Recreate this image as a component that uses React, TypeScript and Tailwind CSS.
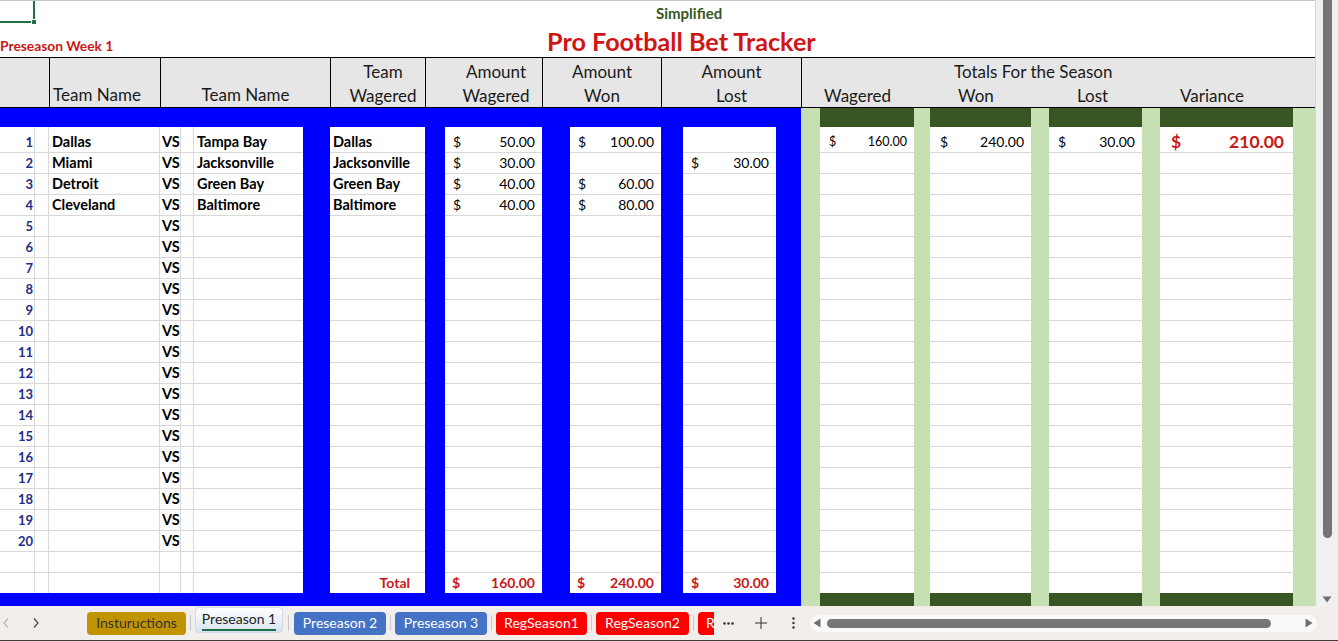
import React from "react";

const COLS =
  "grid grid-cols-[35px_14px_111px_21px_13px_109px_27px_95px_20px_97px_28px_91px_22px_93px_25px_19px_94px_16px_101px_18px_93px_18px_133px_22px]";

// g = white with gridlines right+bottom, w = white bottom line, b = blue stripe, l = light green stripe
const kind = ["g", "g", "g", "g", "g", "w", "b", "w", "b", "w", "b", "w", "b", "w", "b", "l", "w", "l", "w", "l", "w", "l", "w", "l"];

const cellBg = (k: string, line: boolean) => {
  if (k === "b") return "bg-[#0000ff]";
  if (k === "l") return "bg-[#c6e0b4]";
  if (k === "g") return line ? "bg-white border-r border-b border-[#d9d9d9]" : "bg-white border-r border-[#d9d9d9]";
  return line ? "bg-white border-b border-[#d9d9d9]" : "bg-white";
};

const bandBg = (i: number) => (i <= 14 ? "bg-[#0000ff]" : kind[i] === "l" ? "bg-[#c6e0b4]" : "bg-[#375623]");

type Game = { home: string; away: string; pick: string; wager: string; won: string; lost: string };

const games: Game[] = [
  { home: "Dallas", away: "Tampa Bay", pick: "Dallas", wager: "50.00", won: "100.00", lost: "" },
  { home: "Miami", away: "Jacksonville", pick: "Jacksonville", wager: "30.00", won: "", lost: "30.00" },
  { home: "Detroit", away: "Green Bay", pick: "Green Bay", wager: "40.00", won: "60.00", lost: "" },
  { home: "Cleveland", away: "Baltimore", pick: "Baltimore", wager: "40.00", won: "80.00", lost: "" },
];

const Money = ({ v, className }: { v: string; className: string }) =>
  v ? (
    <div className={`w-full flex justify-between leading-[20px] ${className}`}>
      <span>$</span>
      <span>{v}</span>
    </div>
  ) : null;

function Row({ h, cells, line = true }: { h: string; cells: Record<number, React.ReactNode>; line?: boolean }) {
  return (
    <div className={`${COLS} ${h}`}>
      {kind.map((k, i) => (
        <div key={i} className={`${cellBg(k, line)} flex items-end min-w-0 overflow-hidden whitespace-nowrap`}>
          {cells[i]}
        </div>
      ))}
    </div>
  );
}

function Band({ h }: { h: string }) {
  return (
    <div className={`${COLS} ${h}`}>
      {kind.map((_, i) => (
        <div key={i} className={bandBg(i)} />
      ))}
    </div>
  );
}

const team = "pl-[3px] leading-[20px] text-[14.5px] font-bold";

function Sheet() {
  const rows = Array.from({ length: 20 }, (_, i) => games[i]);
  return (
    <div className="w-[1315px] flex flex-col">
      {/* row 1 */}
      <div className="flex h-[23px] border-t border-[#c6c6c6]">
        <div className="relative w-[35px] h-full border-r-2 border-b-2 border-[#217346]">
          <div className="absolute right-[-4px] bottom-[-4px] w-[6px] h-[6px] bg-[#217346] border border-white" />
        </div>
        <div className="pl-[621px] pt-[1px] text-[15px] font-bold text-[#375623] leading-[22px]">Simplified</div>
      </div>

      {/* row 2 */}
      <div className="flex h-[34px] items-end">
        <div className="w-[547px] pb-[3px] text-[13.8px] font-bold text-[#c81818] leading-[16px]">Preseason Week 1</div>
        <div className="pb-[2px] text-[25.2px] font-bold text-[#d01515] leading-[28px]">Pro Football Bet Tracker</div>
      </div>

      {/* headers */}
      <div className="flex h-[51px] border-y border-black bg-[#e7e6e6] text-[17px] leading-[24px] text-[#1a1a1a]">
        <div className="w-[50px] border-r border-black" />
        <div className="w-[111px] border-r border-black pt-[2px] flex flex-col">
          <div className="h-[24px]" />
          <div className="pl-[3px]">Team Name</div>
        </div>
        <div className="w-[170px] border-r border-black pt-[2px] flex flex-col text-center">
          <div className="h-[24px]" />
          <div>Team Name</div>
        </div>
        <div className="w-[95px] border-r border-black pt-[2px] pl-[10px] flex flex-col text-center">
          <div>Team</div>
          <div>Wagered</div>
        </div>
        <div className="w-[117px] border-r border-black pt-[2px] pl-[24px] flex flex-col text-center">
          <div>Amount</div>
          <div>Wagered</div>
        </div>
        <div className="w-[119px] border-r border-black pt-[2px] flex flex-col text-center">
          <div>Amount</div>
          <div>Won</div>
        </div>
        <div className="w-[140px] border-r border-black pt-[2px] flex flex-col text-center">
          <div>Amount</div>
          <div>Lost</div>
        </div>
        <div className="w-[513px] pt-[2px] flex flex-col">
          <div className="pl-[152px]">Totals For the Season</div>
          <div className="flex pl-[22px]">
            <span className="w-[134px]">Wagered</span>
            <span className="w-[119px]">Won</span>
            <span className="w-[103px]">Lost</span>
            <span>Variance</span>
          </div>
        </div>
      </div>

      <Band h="h-[19px]" />

      {rows.map((g, i) => {
        const cells: Record<number, React.ReactNode> = {
          0: (
            <div className="w-full text-right pr-[1px] leading-[20px] text-[13px] font-bold text-[#1f2d86]">{i + 1}</div>
          ),
          3: <div className="pl-[2px] leading-[20px] text-[14.5px] font-bold">VS</div>,
        };
        if (g) {
          cells[2] = <div className={team}>{g.home}</div>;
          cells[5] = <div className={team}>{g.away}</div>;
          cells[7] = <div className={team}>{g.pick}</div>;
          cells[9] = <Money v={g.wager} className="pl-[8px] pr-[7px] text-[14px]" />;
          cells[11] = <Money v={g.won} className="pl-[8px] pr-[7px] text-[14px]" />;
          cells[13] = <Money v={g.lost} className="pl-[8px] pr-[7px] text-[14px]" />;
        }
        if (i === 0) {
          cells[16] = <Money v="160.00" className="pl-[9px] pr-[7px] text-[12.5px]" />;
          cells[18] = <Money v="240.00" className="pl-[10px] pr-[7px] text-[14px]" />;
          cells[20] = <Money v="30.00" className="pl-[9px] pr-[7px] text-[14px]" />;
          cells[22] = (
            <Money v="210.00" className="pl-[11px] pr-[9px] text-[17.5px] font-bold text-[#c81818]" />
          );
        }
        return <Row key={i} h={i === 0 ? "h-[26px]" : "h-[21px]"} cells={cells} />;
      })}

      <Row h="h-[21px]" cells={{}} />
      <Row
        h="h-[20px]"
        line={false}
        cells={{
          7: (
            <div className="w-full text-right pr-[15px] leading-[20px] text-[14px] font-bold text-[#c81818]">Total</div>
          ),
          9: <Money v="160.00" className="pl-[7px] pr-[7px] text-[14px] font-bold text-[#c81818]" />,
          11: <Money v="240.00" className="pl-[7px] pr-[7px] text-[14px] font-bold text-[#c81818]" />,
          13: <Money v="30.00" className="pl-[8px] pr-[7px] text-[14px] font-bold text-[#c81818]" />,
        }}
      />
      <Band h="h-[13px]" />
    </div>
  );
}

function VScroll() {
  return (
    <div className="w-[23px] h-full bg-[#f1f0f0] border-l border-[#d6d6d6] flex flex-col items-center">
      <div className="w-[9px] h-[538px] rounded-b-full bg-[#747474]" />
      <svg className="mt-auto mb-[3px]" width="10" height="7" viewBox="0 0 10 7">
        <path d="M0.5 0.5 H9.5 L5 6.5 Z" fill="#6f6f6f" />
      </svg>
    </div>
  );
}

const Sep = ({ m }: { m: string }) => <div className={`${m} w-px h-[16px] bg-[#c8c8c8]`} />;

function TabBar() {
  return (
    <div className="h-[35px] bg-[#f1eeec] border-b border-[#3c3c3c] flex items-center text-[14px] leading-[18px] whitespace-nowrap">
      <div className="w-[87px] flex items-center">
        <svg className="ml-[3px]" width="6" height="10" viewBox="0 0 6 10">
          <path d="M5 0.5 L1 5 L5 9.5" stroke="#b5b5b5" strokeWidth="1.2" fill="none" />
        </svg>
        <svg className="ml-[24px]" width="6" height="10" viewBox="0 0 6 10">
          <path d="M1 0.5 L5 5 L1 9.5" stroke="#444" strokeWidth="1.2" fill="none" />
        </svg>
      </div>
      <div className="w-[99px] h-[23px] rounded-[4px] bg-[#c29300] text-[#333] flex items-center justify-center">
        Instuructions
      </div>
      <Sep m="mx-[4px]" />
      <div className="self-start mt-[1px] w-[88px] h-[26px] rounded-[4px] border border-[#d3dae5] bg-linear-to-b from-white to-[#d7e2f0] flex flex-col items-center pt-[2px] text-[#222]">
        <span className="leading-[18px]">Preseason 1</span>
        <div className="mt-[1px] h-[2px] w-[74px] bg-[#1e7145]" />
      </div>
      <Sep m="mx-[5px]" />
      <div className="w-[92px] h-[23px] rounded-[4px] bg-[#4472c4] text-white flex items-center justify-center">
        Preseason 2
      </div>
      <Sep m="mx-[4px]" />
      <div className="w-[92px] h-[23px] rounded-[4px] bg-[#4472c4] text-white flex items-center justify-center">
        Preseason 3
      </div>
      <Sep m="mx-[4px]" />
      <div className="w-[91px] h-[23px] rounded-[4px] bg-[#ff0000] text-white flex items-center justify-center">
        RegSeason1
      </div>
      <Sep m="mx-[4px]" />
      <div className="w-[93px] h-[23px] rounded-[4px] bg-[#ff0000] text-white flex items-center justify-center">
        RegSeason2
      </div>
      <Sep m="mx-[4px]" />
      <div className="w-[16px] h-[23px] rounded-l-[4px] bg-[#ff0000] text-white flex items-center pl-[8px]">
        R
      </div>
      <svg className="ml-[9px]" width="11" height="3" viewBox="0 0 11 3">
        <circle cx="1.5" cy="1.5" r="1.3" fill="#333" />
        <circle cx="5.5" cy="1.5" r="1.3" fill="#333" />
        <circle cx="9.5" cy="1.5" r="1.3" fill="#333" />
      </svg>
      <svg className="ml-[21px]" width="12" height="12" viewBox="0 0 12 12">
        <path d="M6 0 V12 M0 6 H12" stroke="#333" strokeWidth="1" />
      </svg>
      <svg className="ml-[25px]" width="3" height="12" viewBox="0 0 3 12">
        <circle cx="1.5" cy="1.5" r="1.2" fill="#333" />
        <circle cx="1.5" cy="6" r="1.2" fill="#333" />
        <circle cx="1.5" cy="10.5" r="1.2" fill="#333" />
      </svg>
      <div className="ml-[15px] w-[507px] h-[17px] rounded-full bg-[#fafafa] flex items-center">
        <svg className="ml-[3px]" width="8" height="10" viewBox="0 0 8 10">
          <path d="M7.5 0.5 V9.5 L0.5 5 Z" fill="#6f6f6f" />
        </svg>
        <div className="ml-[6px] w-[444px] h-[9px] rounded-full bg-[#777]" />
        <svg className="ml-[34px]" width="8" height="10" viewBox="0 0 8 10">
          <path d="M0.5 0.5 V9.5 L7.5 5 Z" fill="#6f6f6f" />
        </svg>
      </div>
    </div>
  );
}

export default function App() {
  return (
    <div className="w-[1338px] h-[641px] overflow-hidden bg-white font-['Lato',sans-serif] text-black flex flex-col">
      <div className="flex h-[606px]">
        <Sheet />
        <VScroll />
      </div>
      <TabBar />
    </div>
  );
}
